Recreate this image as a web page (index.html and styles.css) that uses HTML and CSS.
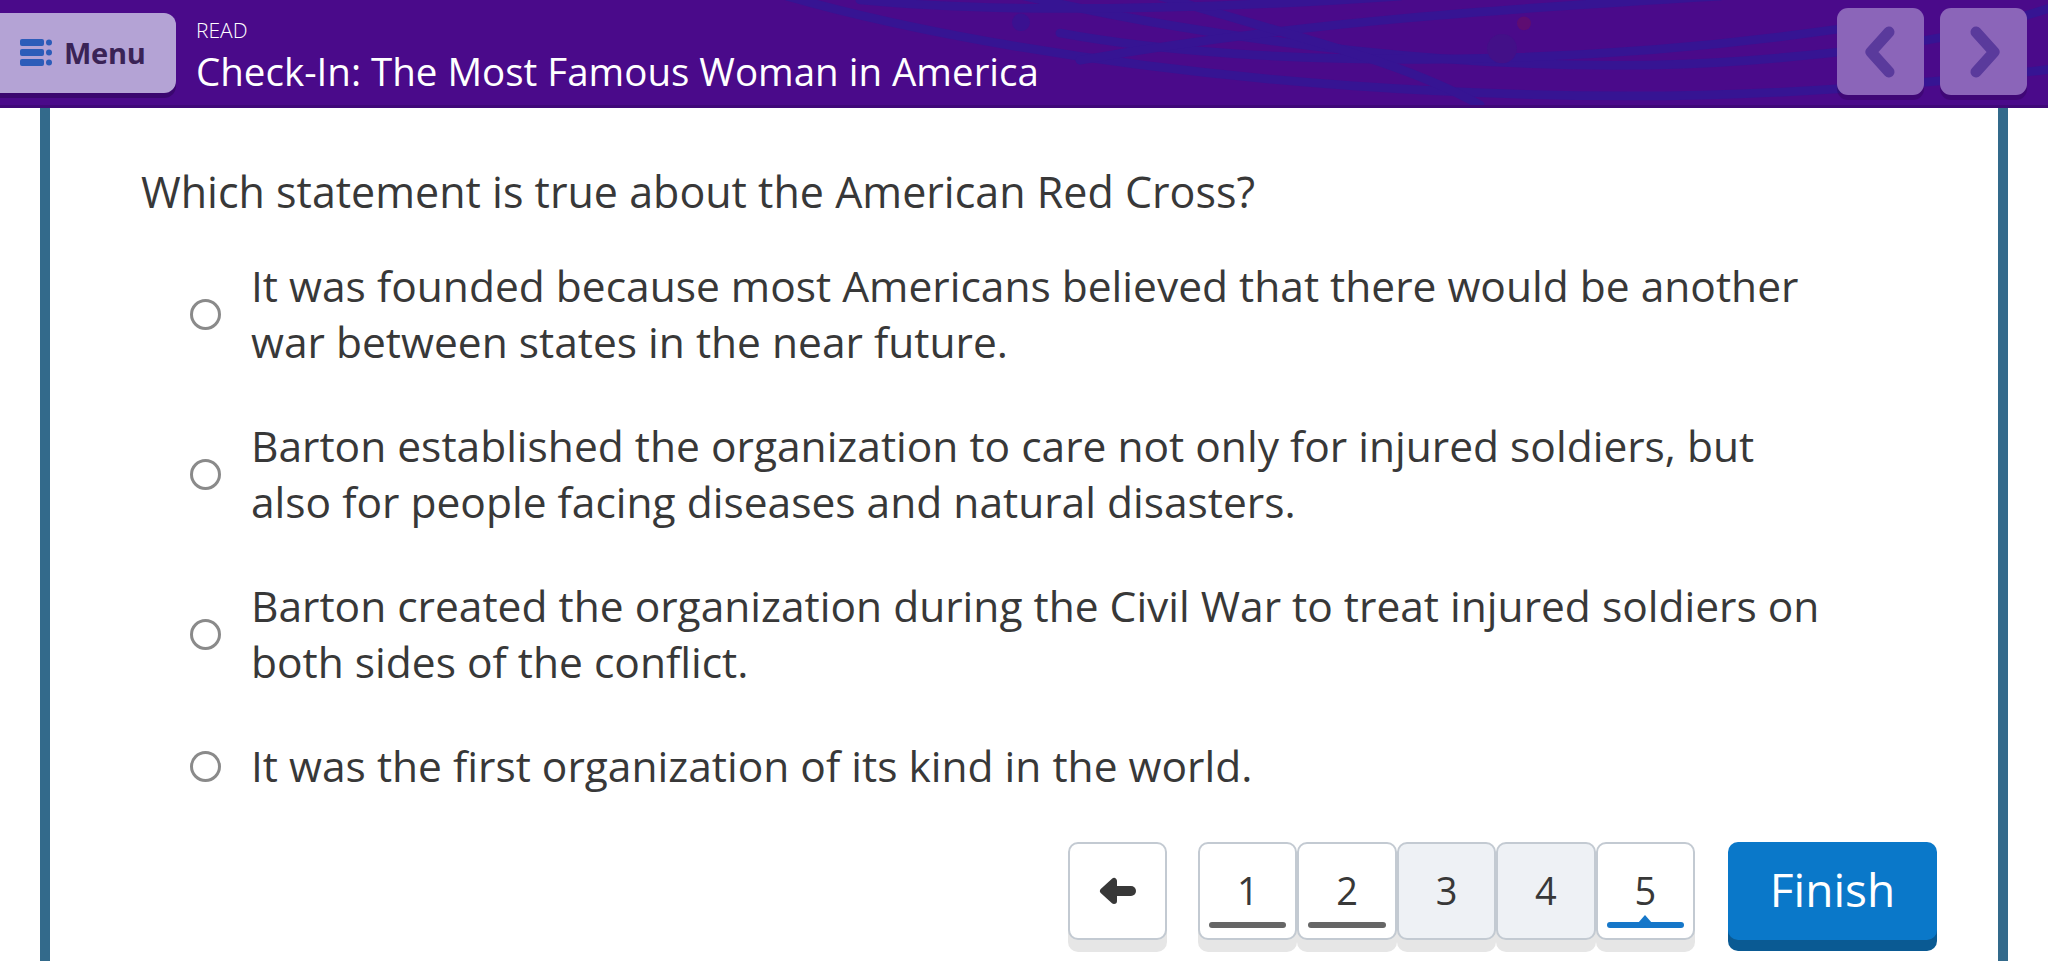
FILE: index.html
```html
<!DOCTYPE html>
<html lang="en">
<head>
<meta charset="utf-8">
<title>Check-In: The Most Famous Woman in America</title>
<link rel="stylesheet" href="styles.css">
</head>
<body>
<header class="topbar">
  <svg class="topbar-art" viewBox="0 0 2048 108" preserveAspectRatio="none" aria-hidden="true">
    <g fill="none" stroke="#361493" stroke-width="9" stroke-linecap="round">
      <path d="M780 -6 C900 30 1100 70 1350 88 S1800 102 2060 70"/>
      <path d="M1000 -10 C1200 40 1500 82 1750 62 S2000 18 2100 -6"/>
      <path d="M1060 34 C1260 72 1600 72 1900 20"/>
      <path d="M1080 62 C1300 22 1520 8 1720 -4"/>
      <path d="M1160 -4 C1300 40 1400 62 1480 108"/>
      <path d="M860 0 C1000 14 1200 10 1400 -4"/>
    </g>
    <circle cx="1021" cy="23" r="9" fill="#3a1190"/>
    <circle cx="1502" cy="50" r="15" fill="#431088"/>
    <circle cx="1524" cy="24" r="7" fill="#5e0c72"/>
  </svg>
  <button class="menu-btn" type="button">
    <svg class="menu-icon" viewBox="0 0 32 27" aria-hidden="true">
      <rect x="0" y="0" width="24" height="7" rx="2"/>
      <rect x="0" y="10" width="24" height="7" rx="2"/>
      <rect x="0" y="20" width="24" height="7" rx="2"/>
      <circle cx="29" cy="3.5" r="3"/>
      <circle cx="29" cy="13.5" r="3"/>
      <circle cx="29" cy="23.5" r="3"/>
    </svg>
    <span>Menu</span>
  </button>
  <div class="titles">
    <div class="kicker">READ</div>
    <h1 class="title">Check-In: The Most Famous Woman in America</h1>
  </div>
  <div class="step-nav">
    <button class="step-btn" type="button" aria-label="Previous">
      <svg viewBox="0 0 40 56" aria-hidden="true"><path d="M28 8 L10 28 L28 48"/></svg>
    </button>
    <button class="step-btn" type="button" aria-label="Next">
      <svg viewBox="0 0 40 56" aria-hidden="true"><path d="M12 8 L30 28 L12 48"/></svg>
    </button>
  </div>
</header>

<main class="content">
  <p class="question">Which statement is true about the American Red Cross?</p>
  <ul class="options">
    <li class="option"><span class="radio"></span><span class="opt-text">It was founded because most Americans believed that there would be another war between states in the near future.</span></li>
    <li class="option"><span class="radio"></span><span class="opt-text">Barton established the organization to care not only for injured soldiers, but also for people facing diseases and natural disasters.</span></li>
    <li class="option"><span class="radio"></span><span class="opt-text">Barton created the organization during the Civil War to treat injured soldiers on both sides of the conflict.</span></li>
    <li class="option"><span class="radio"></span><span class="opt-text">It was the first organization of its kind in the world.</span></li>
  </ul>

  <nav class="pager">
    <button class="key back-key" type="button" aria-label="Back">
      <svg viewBox="0 0 40 32" aria-hidden="true">
        <path class="arrow-head" d="M5 16 L16 6 L16 26 Z"/>
        <path class="arrow-shaft" d="M14 16 H33"/>
      </svg>
    </button>
    <div class="pages">
      <button class="key page done" type="button">1</button>
      <button class="key page done" type="button">2</button>
      <button class="key page todo" type="button">3</button>
      <button class="key page todo" type="button">4</button>
      <button class="key page current" type="button">5</button>
    </div>
    <button class="finish" type="button">Finish</button>
  </nav>
</main>
</body>
</html>
```
FILE: styles.css
```css
* { box-sizing: border-box; }

html, body {
  margin: 0;
  padding: 0;
  height: 100%;
  overflow: hidden;
  background: #ffffff;
}

body {
  font-family: "Open Sans", "DejaVu Sans", sans-serif;
  color: #383838;
  display: flex;
  flex-direction: column;
}

button {
  font-family: inherit;
  cursor: pointer;
}

/* ---------- top bar ---------- */
.topbar {
  position: relative;
  height: 108px;
  flex: 0 0 108px;
  background: #4a0a8a;
  border-bottom: 3px solid #3f0878;
  display: flex;
  align-items: center;
  overflow: hidden;
}

.topbar-art {
  position: absolute;
  inset: 0;
  width: 100%;
  height: 100%;
  pointer-events: none;
}

.menu-btn {
  position: relative;
  margin-left: -12px;
  width: 188px;
  height: 80px;
  padding: 0 0 0 32px;
  border: 0;
  border-radius: 12px;
  background: #b4a3d5;
  box-shadow: 0 5px 0 rgba(30, 0, 60, 0.35);
  display: flex;
  align-items: center;
  gap: 12px;
  color: #3a2356;
  font-size: 29px;
  font-weight: 700;
  letter-spacing: -0.3px;
}

.menu-icon {
  width: 32px;
  height: 27px;
  fill: #2c5cb9;
  flex: none;
}

.titles {
  position: relative;
  align-self: flex-start;
  margin-top: 16px;
  margin-left: 20px;
  color: #ffffff;
}

.kicker {
  font-size: 21px;
  line-height: 29px;
  font-weight: 300;
}

.title {
  margin: 0;
  font-size: 38.5px;
  line-height: 52.5px;
  font-weight: 500;
}

.step-nav {
  position: relative;
  margin-left: auto;
  margin-right: 21px;
  margin-top: -2px;
  display: flex;
  gap: 16px;
}

.step-btn {
  width: 87px;
  height: 87px;
  border: 0;
  padding: 0;
  border-radius: 11px;
  background: #8b65b9;
  box-shadow: 0 5px 0 rgba(30, 0, 60, 0.25);
  display: flex;
  align-items: center;
  justify-content: center;
}

.step-btn svg {
  width: 40px;
  height: 56px;
  fill: none;
  stroke: #5a3a9c;
  stroke-width: 11;
  stroke-linecap: round;
  stroke-linejoin: round;
}

/* ---------- content ---------- */
.content {
  flex: 1;
  margin: 0 40px;
  border-left: 10px solid #336a8b;
  border-right: 10px solid #336a8b;
  padding: 56px 61px 0 91px;
}

.question {
  margin: 0;
  font-size: 43px;
  line-height: 56px;
  color: #383838;
}

.options {
  list-style: none;
  margin: 38px 0 0;
  padding: 0 0 0 49px;
  display: flex;
  flex-direction: column;
  gap: 48px;
}

.option {
  display: flex;
  align-items: center;
}

.radio {
  flex: none;
  width: 31px;
  height: 31px;
  border: 3px solid #8a8a8a;
  border-radius: 50%;
  background: #fff;
  margin-right: 30px;
}

.opt-text {
  max-width: 1580px;
  font-size: 42.5px;
  line-height: 56px;
  color: #383838;
}

/* ---------- pager ---------- */
.pager {
  margin-top: 48px;
  display: flex;
  justify-content: flex-end;
  align-items: flex-start;
}

.key {
  position: relative;
  height: 98px;
  border: 2px solid #c3cad2;
  border-radius: 10px;
  background: #ffffff;
  box-shadow: 0 12px 0 #e6e6e6;
  padding: 0;
  display: flex;
  align-items: center;
  justify-content: center;
  color: #383838;
}

.back-key {
  width: 99px;
  margin-right: 31px;
}

.back-key svg {
  width: 40px;
  height: 32px;
}

.arrow-head {
  fill: #383838;
  stroke: #383838;
  stroke-width: 6;
  stroke-linejoin: round;
}

.arrow-shaft {
  fill: none;
  stroke: #383838;
  stroke-width: 10;
  stroke-linecap: round;
}

.pages {
  display: flex;
  margin-right: 33px;
}

.page {
  width: 99.4px;
  font-size: 38px;
  font-weight: 400;
  padding-bottom: 2px;
}

.page.todo {
  background: #eef1f5;
}

.page.done::after,
.page.current::after {
  content: "";
  position: absolute;
  left: 9px;
  right: 9px;
  bottom: 10px;
  height: 6px;
  border-radius: 3px;
  background: #666666;
}

.page.current::after {
  background: #1677c9;
}

.page.current::before {
  content: "";
  position: absolute;
  left: 50%;
  bottom: 15px;
  margin-left: -7px;
  border-left: 7px solid transparent;
  border-right: 7px solid transparent;
  border-bottom: 8px solid #1677c9;
}

.finish {
  width: 209px;
  height: 98px;
  border: 0;
  border-radius: 10px;
  background: #0a78c9;
  box-shadow: 0 11px 0 #0a5a93;
  color: #ffffff;
  font-size: 46px;
  font-weight: 500;
  padding: 0 0 4px;
}
```
